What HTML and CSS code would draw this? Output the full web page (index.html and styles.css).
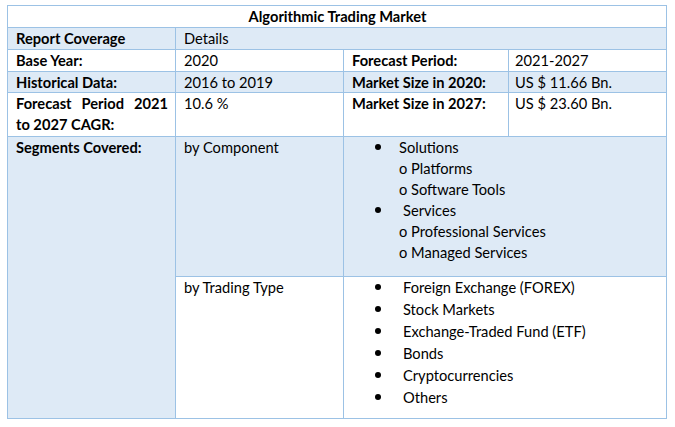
FILE: index.html
```html
<!DOCTYPE html>
<html>
<head>
<meta charset="utf-8">
<link rel="stylesheet" href="styles.css">
</head>
<body>
<div class="table">
  <div class="cell title">Algorithmic Trading Market</div>

  <div class="cell b blue">Report Coverage</div>
  <div class="cell blue span3">Details</div>

  <div class="cell b">Base Year:</div>
  <div class="cell">2020</div>
  <div class="cell b">Forecast Period:</div>
  <div class="cell c4">2021-2027</div>

  <div class="cell b blue">Historical Data:</div>
  <div class="cell blue">2016 to 2019</div>
  <div class="cell b blue">Market Size in 2020:</div>
  <div class="cell blue c4">US $ 11.66 Bn.</div>

  <div class="cell b just">Forecast Period 2021 to 2027 CAGR:</div>
  <div class="cell">10.6 %</div>
  <div class="cell b">Market Size in 2027:</div>
  <div class="cell c4">US $ 23.60 Bn.</div>

  <div class="cell b blue seg">Segments Covered:</div>
  <div class="cell blue">by Component</div>
  <div class="cell blue span2 list comp">
    <div class="item"><span class="dot"></span>Solutions</div>
    <div class="sub">o Platforms</div>
    <div class="sub">o Software Tools</div>
    <div class="item wide"><span class="dot"></span>Services</div>
    <div class="sub">o Professional Services</div>
    <div class="sub">o Managed Services</div>
  </div>

  <div class="cell">by Trading Type</div>
  <div class="cell span2 list trade">
    <div class="item wide"><span class="dot"></span>Foreign Exchange (FOREX)</div>
    <div class="item wide"><span class="dot"></span>Stock Markets</div>
    <div class="item wide"><span class="dot"></span>Exchange-Traded Fund (ETF)</div>
    <div class="item wide"><span class="dot"></span>Bonds</div>
    <div class="item wide"><span class="dot"></span>Cryptocurrencies</div>
    <div class="item wide"><span class="dot"></span>Others</div>
  </div>
</div>
</body>
</html>
```

FILE: styles.css
```css
html, body {
  margin: 0;
  padding: 0;
  background: #ffffff;
}

body {
  font-family: Lato, "Open Sans", sans-serif;
  font-size: 14.67px;
  color: #000000;
}

.table {
  margin: 5px 0 0 7px;
  width: 660px;
  box-sizing: border-box;
  display: grid;
  grid-template-columns: 167px 167px 164px 157px;
  grid-template-rows: 21px 21px 21px 20px 43px 139px 141px;
  gap: 1px;
  padding: 1px;
  background: #9cc2e5;
}

.cell {
  background: #ffffff;
  padding: 0 7px 0 8px;
  line-height: 21px;
  white-space: nowrap;
  overflow: hidden;
}

.blue {
  background: #deeaf6;
}

.b {
  font-weight: 700;
}

.title {
  grid-column: 1 / 5;
  text-align: center;
  font-weight: 700;
  box-shadow: 0 1px 0 #9cc2e5;
}

.span3 {
  grid-column: 2 / 5;
}

.span2 {
  grid-column: 3 / 5;
}

.c4 {
  padding-left: 6px;
}

.just {
  white-space: normal;
  text-align: justify;
}

.seg {
  grid-row: 6 / 8;
}

.list {
  padding-left: 31px;
}

.trade {
  line-height: 22px;
}

.item {
  display: flex;
  align-items: center;
}

.dot {
  flex: none;
  width: 6px;
  height: 6px;
  border-radius: 50%;
  background: #000000;
  margin-right: 18px;
  position: relative;
  top: -1px;
}

.wide .dot {
  margin-right: 22px;
}

.sub {
  padding-left: 24px;
}
```
